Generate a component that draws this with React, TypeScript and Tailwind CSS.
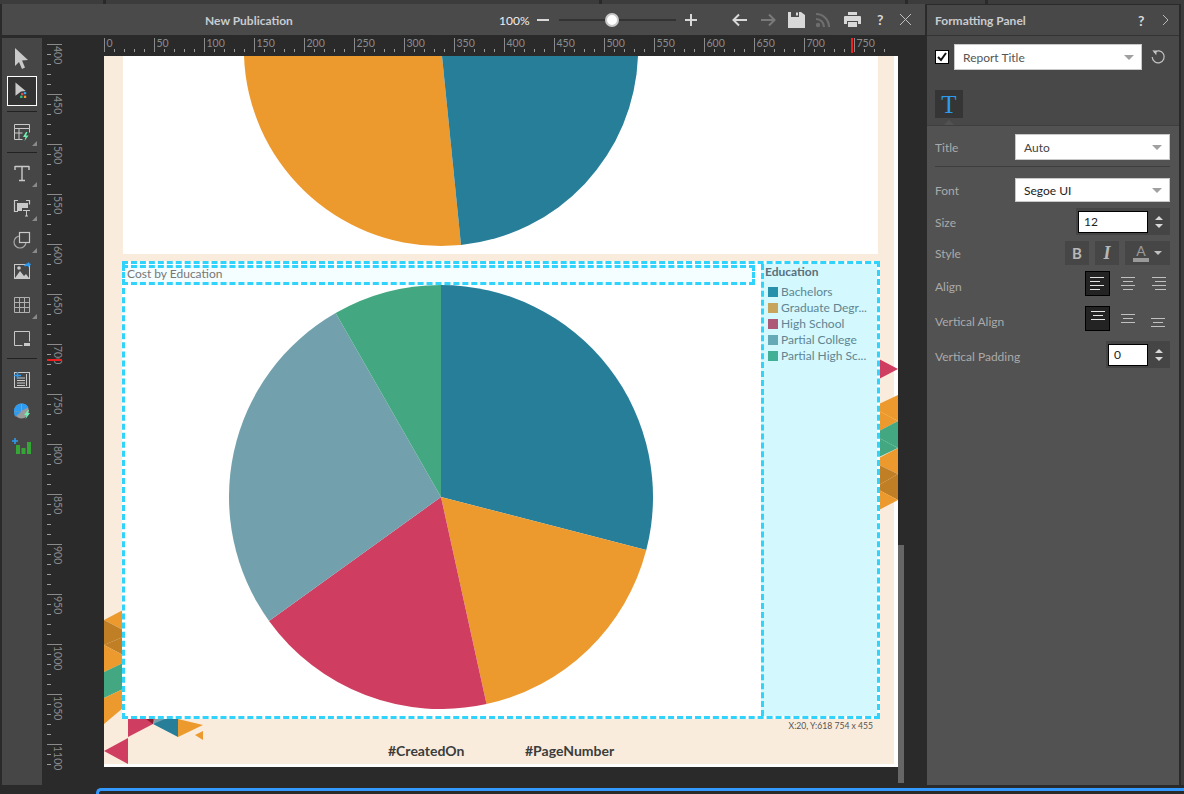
import React from "react";

const ticksH = Array.from({ length: 79 }, (_, i) => i);
const ticksV = Array.from({ length: 73 }, (_, i) => i);

function TopRuler() {
  return (
    <svg width="821" height="21" className="block">
      {ticksH.map((i) => {
        const x = i * 10 + 0.5;
        const major = i % 5 === 0;
        return <line key={i} x1={x} x2={x} y1={major ? 3 : 14} y2={17} stroke={major ? "#8a8a8a" : "#9a9a9a"} />;
      })}
      {ticksH.filter((i) => i % 5 === 0).map((i) => (
        <text key={i} x={i * 10 + 2.5} y={12} fontSize="10.5" fill="#8c8c8c" fontFamily="Lato, sans-serif">{i * 10}</text>
      ))}
      <rect x="747" y="3" width="2" height="15" fill="#ee2020" />
    </svg>
  );
}

function LeftRuler() {
  return (
    <svg width="62" height="750" className="block">
      {ticksV.map((i) => {
        const y = i * 10 + 9.5;
        const major = i % 5 === 0;
        return <line key={i} x1={5} x2={major ? 20 : 9} y1={y} y2={y} stroke={major ? "#8a8a8a" : "#9a9a9a"} />;
      })}
      {ticksV.filter((i) => i % 5 === 0).map((i) => (
        <text key={i} transform={`translate(12 ${i * 10 + 11}) rotate(90)`} fontSize="10.5" fill="#8c8c8c" fontFamily="Lato, sans-serif">{400 + i * 10}</text>
      ))}
      <rect x="5" y="324" width="15" height="2" fill="#ee2020" />
    </svg>
  );
}

function Corner() {
  return <path d="M30 24l-5 5h5z" fill="#8a8a8a" />;
}

function Tool({ children, h = 32, selected = false }: { children: React.ReactNode; h?: number; selected?: boolean }) {
  return (
    <div className="flex items-center justify-center" style={{ height: h }}>
      <div className={selected ? "shrink-0 w-[30px] h-[30px] border border-white bg-[#333333] flex items-center justify-center" : "shrink-0 flex items-center justify-center w-[30px] h-[30px]"}>
        <svg width="30" height="30" viewBox="0 0 30 30">{children}</svg>
      </div>
    </div>
  );
}

function Sep() {
  return <div className="mx-[5px] h-px bg-[#222222] shrink-0" />;
}

function Tools() {
  return (
    <div className="w-[40px] h-[747px] mt-[3px] bg-[#464646] flex flex-col">
      <div className="h-[4px]" />
      <Tool h={32}><path d="M8 5l13 12-6 .5 3 7-3 1.5-3-7-4 4z" fill="#c9c9c9" /></Tool>
      <div className="h-[1px]" />
      <Tool h={32} selected>
        <path d="M8 6l11 9-5 .5L8 20z" fill="#c9c9c9" />
        <rect x="14" y="17" width="2.500" height="2.500" fill="#ea4a4a" />
        <rect x="17" y="16" width="2.500" height="2.500" fill="#35a5ee" />
        <rect x="13" y="20" width="2.500" height="2.500" fill="#35c08a" />
        <rect x="17" y="20" width="2.500" height="2.500" fill="#ee9a2e" />
      </Tool>
      <div className="h-[4px]" />
      <Sep />
      <Tool h={40}>
        <path d="M7.500 7.500h15v4h-15zM7.500 11.500v11h8M22.500 11.500v4M7.500 16h8M12 11.500v11" fill="none" stroke="#c9c9c9" />
        <path d="M19 15l-3 5h2.500l-1 4 4-5.500h-2.500l1.500-3.500z" fill="#6ff0b0" />
        <Corner />
      </Tool>
      <Sep />
      <Tool h={40}>
        <path d="M8 8.500h14M15 8.500V22.500M12 22.500h6M8 8v4M22 8v4" fill="none" stroke="#c9c9c9" strokeWidth="1.400" />
        <Corner />
      </Tool>
      <Tool h={28}>
        <path d="M11 8.500H7.500v11H11M19 8.500h3.500v4" fill="none" stroke="#c9c9c9" strokeWidth="1.200" />
        <rect x="10" y="11" width="11" height="5" fill="#c9c9c9" />
        <rect x="10" y="16" width="5" height="3" fill="#c9c9c9" />
        <path d="M16 18.500h7M19.500 18.500v5.500M18 24h3" stroke="#c9c9c9" fill="none" />
        <Corner />
      </Tool>
      <Tool h={36}>
        <circle cx="13" cy="18" r="6" fill="none" stroke="#a8a8a8" strokeWidth="1.200" />
        <rect x="12.500" y="8.500" width="10" height="10" fill="#464646" stroke="#c9c9c9" strokeWidth="1.200" />
        <Corner />
      </Tool>
      <Tool h={28}>
        <rect x="7.500" y="8.500" width="15" height="14" fill="none" stroke="#c9c9c9" />
        <path d="M8 22l5-7 4 5 2-2 3 4z" fill="#c9c9c9" />
        <circle cx="12" cy="12" r="1.800" fill="#c9c9c9" />
        <path d="M17 10c1-2 3-3 4-2.500v-1.500l3 2.500-3 3V10c-1 0-2 .5-4 0z" fill="#2e9bf0" />
      </Tool>
      <Tool h={40}>
        <path d="M7.500 7.500h15v15h-15zM7.500 12.500h15M7.500 17.500h15M12.500 7.500v15M17.500 7.500v15" fill="none" stroke="#b0b0b0" />
        <Corner />
      </Tool>
      <Tool h={26}>
        <path d="M7.500 22.500v-14h15v10M7.500 22.500h8" fill="none" stroke="#c9c9c9" />
        <rect x="17" y="20" width="6" height="3" fill="#c9c9c9" />
      </Tool>
      <div className="h-[7px]" />
      <Sep />
      <Tool h={40}>
        <rect x="7.500" y="8.500" width="15" height="15" fill="none" stroke="#c9c9c9" />
        <path d="M10 14h8M10 16.500h8M10 19h8M10 21.500h8M19.500 10v12" stroke="#c9c9c9" />
        <path d="M7 11.500h7M10.500 8v7" stroke="#2e9bf0" strokeWidth="1.600" />
      </Tool>
      <Tool h={24}>
        <circle cx="14.500" cy="15" r="7.500" fill="#9a9a9a" />
        <path d="M15 14.500V7.500a7.500 7.500 0 0 1 6.500 3.800zM14 15.500H7a7.500 7.500 0 0 1 7-8zM14 15.800l-5.500 5A7.500 7.500 0 0 1 7 16z" fill="#2e9bf0" />
        <path d="M21 14l-4 5h2.500l-1 4 4.500-6h-2.500l1.500-3z" fill="#6ff0b0" />
      </Tool>
      <Tool h={44}>
        <path d="M5 11h6M8 8v6" stroke="#2e9bf0" strokeWidth="1.600" />
        <rect x="9" y="15" width="4" height="9" fill="#35a535" />
        <rect x="14.500" y="18" width="4" height="6" fill="#35a535" />
        <rect x="20" y="12" width="4" height="12" fill="#35a535" />
      </Tool>
    </div>
  );
}

function pt(cx: number, cy: number, r: number, a: number) {
  const t = (a * Math.PI) / 180;
  return [cx + r * Math.sin(t), cy - r * Math.cos(t)];
}

function Pie() {
  const slices: [number, number, string][] = [
    [0, 104.5, "#267e99"],
    [104.5, 167.6, "#ec9a2e"],
    [167.6, 234.2, "#cf3d60"],
    [234.2, 330.2, "#72a1ad"],
    [330.2, 360, "#43a882"],
  ];
  return (
    <svg width="424" height="424" viewBox="0 0 424 424" className="block">
      {slices.map(([a, b, c]) => {
        const [x1, y1] = pt(212, 212, 212, a);
        const [x2, y2] = pt(212, 212, 212, b);
        return <path key={a} d={`M212 212L${x1} ${y1}A212 212 0 ${b - a > 180 ? 1 : 0} 1 ${x2} ${y2}Z`} fill={c} />;
      })}
    </svg>
  );
}

function TopPie() {
  return (
    <svg width="396" height="190" viewBox="0 0 396 190" className="block">
      <path d="M1 0A197 197 0 0 0 198 190 L218 189 L199 0Z" fill="#ec9a2e" />
      <path d="M199 0L218 189A197 197 0 0 0 395 0Z" fill="#267e99" />
    </svg>
  );
}

function Triangles() {
  const o = "#ec9a2e", d = "#c07f24", g = "#43a882", r = "#cf3d60", t = "#267e99";
  const polys: [string, string][] = [
    ["775,303 794,313 775,323", r],
    ["775,348 794,339 794,365 775,355", o],
    ["775,355 794,365 775,375", o],
    ["775,375 794,365 794,392 775,382", g],
    ["775,382 794,392 775,401", g],
    ["775,402 794,392 794,418 775,409", o],
    ["775,409 794,418 775,429", d],
    ["775,429 794,418 794,444 775,434", d],
    ["775,434 794,444 775,454", o],
    ["0,564 19,554 19,574", o],
    ["0,564 19,574 19,581 0,589", d],
    ["0,589 19,581 19,599", d],
    ["0,589 19,599 19,607 0,616", o],
    ["0,616 19,607 19,633 0,642", g],
    ["0,642 19,633 19,652 0,668", o],
    ["24,663 51,663 49,668 24,681", r],
    ["42,663 49,668 49,663", "#8a1c2c"],
    ["49,668 74,681 74,663 56,663", t],
    ["49,668 61,663 51,663", "#72a1ad"],
    ["74,663 99,669 74,681", o],
    ["91,679 99,675 99,684", o],
    ["0,695 24,682 24,708", r],
  ];
  return (
    <svg width="794" height="711" className="absolute left-0 top-0 pointer-events-none">
      {polys.map(([p, c], i) => <polygon key={i} points={p} fill={c} />)}
    </svg>
  );
}

function Caret({ color = "#a0a0a0" }: { color?: string }) {
  return <span className="w-0 h-0 border-l-[5px] border-r-[5px] border-t-[5px] border-l-transparent border-r-transparent" style={{ borderTopColor: color }} />;
}

function Select({ text, w, h, color = "#444444" }: { text: string; w: string; h: string; color?: string }) {
  return (
    <div className={`${w} ${h} bg-white border border-[#c8c8c8] flex items-center justify-between pl-[8px] pr-[7px] text-[12px]`} style={{ color }}>
      <span className="translate-y-px">{text}</span>
      <Caret />
    </div>
  );
}

function Spin() {
  return (
    <div className="flex-1 flex flex-col items-center gap-[4px]">
      <span className="w-0 h-0 border-l-[4px] border-r-[4px] border-b-[4px] border-l-transparent border-r-transparent border-b-[#d8d8d8]" />
      <span className="w-0 h-0 border-l-[4px] border-r-[4px] border-t-[4px] border-l-transparent border-r-transparent border-t-[#d8d8d8]" />
    </div>
  );
}

function Label({ children, dy = "translate-y-px" }: { children: React.ReactNode; dy?: string }) {
  return <span className={`text-[12px] text-[#aaaaaa] ${dy}`}>{children}</span>;
}

function Lines({ kind, selected = false, dx = 0 }: { kind: "l" | "c" | "r"; selected?: boolean; dx?: number }) {
  const rows: [number, number][] = kind === "l" ? [[4, 18], [4, 14], [4, 18], [4, 14]] : kind === "c" ? [[4, 18], [6, 16], [4, 18], [6, 16]] : [[4, 18], [7, 18], [4, 18], [7, 18]];
  const top = selected ? 5.5 : 6.5;
  return (
    <div className={selected ? "w-[25px] h-[25px] bg-[#232323] border border-black" : "w-[25px] h-[25px]"}>
      <svg width="25" height="25">
        {rows.map(([a, b], i) => <line key={i} x1={a + dx} x2={b + dx} y1={top + i * 4} y2={top + i * 4} stroke={selected ? "#e4e4e4" : "#c0c0c0"} />)}
      </svg>
    </div>
  );
}

function VLines({ pos, selected = false }: { pos: "t" | "m" | "b"; selected?: boolean }) {
  const base = pos === "t" ? 4.5 : pos === "m" ? 8.5 : 12.5;
  const dx = selected ? 0 : 1;
  const rows: [number, number][] = [[5, 19], [7, 17], [5, 19]];
  return (
    <div className={selected ? "w-[25px] h-[25px] bg-[#232323] border border-black" : "w-[25px] h-[25px]"}>
      <svg width="25" height="25">
        {rows.map(([a, b], i) => <line key={i} x1={a + dx} x2={b + dx} y1={base + i * 4} y2={base + i * 4} stroke={selected ? "#e4e4e4" : "#c0c0c0"} />)}
      </svg>
    </div>
  );
}

function Panel() {
  return (
    <div className="w-[252px] ml-[2px] mt-px h-[780px] flex flex-col bg-[#525252]">
      <div className="h-[30px] bg-[#484848] flex items-center pl-[8px] relative">
        <span className="text-[12px] font-bold text-[#c8ccd0] translate-y-px">Formatting Panel</span>
        <span className="absolute left-[211px] top-[5px] text-[14px] font-bold text-[#d8d8d8]">?</span>
        <svg width="10" height="12" className="absolute left-[234px] top-[9px]"><path d="M2 1l5 5-5 5" fill="none" stroke="#b8b8b8" /></svg>
      </div>
      <div className="h-px bg-[#333333]" />
      <div className="h-[89px] bg-[#484848] px-[8px] pt-[8px]">
        <div className="flex items-center h-[26px]">
          <div className="w-[14px] h-[14px] bg-white border border-black flex items-center justify-center">
            <svg width="12" height="12"><path d="M2 6l3 3 5-7" fill="none" stroke="#111111" strokeWidth="2" /></svg>
          </div>
          <div className="ml-[5px]"><Select text="Report Title" w="w-[188px]" h="h-[26px]" color="#555555" /></div>
          <svg width="16" height="16" className="ml-[8px]" viewBox="0 0 16 16">
            <path d="M4 3.500A6 6 0 1 1 2.200 8" fill="none" stroke="#c4c4c4" strokeWidth="1.200" />
            <path d="M2 1.500h4.500V6z" fill="#c4c4c4" transform="rotate(8 4 4)" />
          </svg>
        </div>
        <div className="mt-[20px] w-[28px] h-[28px] bg-[#353535] flex items-center justify-center text-[25px] font-normal leading-none text-[#2e9bf0] font-[family-name:Liberation_Serif,serif]">T</div>
      </div>
      <div className="h-px bg-[#3e3e3e] relative">
        <span className="absolute left-[17px] -top-[5px] w-0 h-0 border-l-[5px] border-r-[5px] border-b-[5px] border-l-transparent border-r-transparent border-b-[#525252]" />
      </div>
      <div className="flex-1 px-[8px] pt-[8px] flex flex-col">
        <div className="flex items-center justify-between h-[26px] pr-[1px]">
          <Label>Title</Label>
          <Select text="Auto" w="w-[155px]" h="h-[26px]" />
        </div>
        <div className="mt-[6px] h-px bg-[#3e3e3e] mr-[1px]" />
        <div className="mt-[11px] flex items-center justify-between h-[24px] pr-[1px]">
          <Label>Font</Label>
          <Select text="Segoe UI" w="w-[155px]" h="h-[24px]" color="#222222" />
        </div>
        <div className="mt-[6px] flex items-center justify-between h-[27px] pr-[1px]">
          <Label>Size</Label>
          <div className="w-[94px] h-[27px] bg-[#454545] flex items-center pl-[2px]">
            <div className="w-[70px] h-[22px] bg-white border border-black text-[12px] text-[#222222] pl-[5px] flex items-center">12</div>
            <Spin />
          </div>
        </div>
        <div className="mt-[6px] flex items-center h-[24px] pr-[1px]">
          <Label>Style</Label>
          <div className="ml-auto flex gap-[6px]">
            <div className="w-[24px] h-[24px] bg-[#464646] flex items-center justify-center text-[15px] font-bold text-[#b8b8b8]">B</div>
            <div className="w-[24px] h-[24px] bg-[#464646] flex items-center justify-center text-[18px] italic font-bold text-[#b8b8b8] font-[family-name:Liberation_Serif,serif]">I</div>
            <div className="w-[45px] h-[24px] bg-[#464646] flex items-center pl-[8px] gap-[5px]">
              <div className="flex flex-col items-center w-[16px]">
                <span className="text-[14px] leading-[14px] text-[#9a9a9a]">A</span>
                <span className="w-[16px] h-[4px] bg-[#9a9a9a]" />
              </div>
              <span className="w-0 h-0 border-l-[4px] border-r-[4px] border-t-[4px] border-l-transparent border-r-transparent border-t-[#c0c0c0]" />
            </div>
          </div>
        </div>
        <div className="mt-[6px] flex items-center h-[25px] pr-[1px]">
          <Label dy="translate-y-[3px]">Align</Label>
          <div className="ml-auto flex gap-[5px]">
            <Lines kind="l" selected />
            <Lines kind="c" dx={2} />
            <Lines kind="r" dx={3} />
          </div>
        </div>
        <div className="mt-[10px] flex items-center h-[25px] pr-[1px]">
          <Label dy="translate-y-[3px]">Vertical Align</Label>
          <div className="ml-auto flex gap-[5px]">
            <VLines pos="t" selected />
            <VLines pos="m" />
            <VLines pos="b" />
          </div>
        </div>
        <div className="mt-[10px] flex items-center h-[27px] pr-[1px]">
          <Label dy="translate-y-[2px]">Vertical Padding</Label>
          <div className="ml-auto w-[64px] h-[27px] bg-[#454545] flex items-center pl-[2px]">
            <div className="w-[40px] h-[22px] bg-white border border-black text-[12px] text-[#222222] pl-[5px] flex items-center">0</div>
            <Spin />
          </div>
        </div>
      </div>
    </div>
  );
}

function Toolbar() {
  return (
    <div className="h-[31px] bg-[#4a4a4a] flex items-center relative">
      <span className="ml-[203px] w-[294px] text-[12px] font-bold text-[#c8ccd0] translate-y-px">New Publication</span>
      <span className="text-[12px] text-[#eeeeee] w-[38px] translate-y-px">100%</span>
      <svg width="12" height="12" className="mr-[10px]"><rect y="5" width="12" height="2" fill="#d8d8d8" /></svg>
      <div className="w-[117px] h-[2px] bg-[#333333] relative">
        <span className="absolute left-[46px] -top-[6px] w-[14px] h-[14px] rounded-full bg-white border-2 border-[#c8c8c8]" />
      </div>
      <svg width="12" height="12" className="ml-[9px]"><path d="M0 6h12M6 0v12" stroke="#d8d8d8" strokeWidth="2" /></svg>
      <svg width="16" height="14" className="ml-[35px]"><path d="M15 7H2M7 1.500L1.500 7 7 12.500" fill="none" stroke="#d8d8d8" strokeWidth="2" /></svg>
      <svg width="16" height="14" className="ml-[12px]"><path d="M1 7h13M9 1.500L14.500 7 9 12.500" fill="none" stroke="#7a7a7a" strokeWidth="2" /></svg>
      <svg width="17" height="16" className="ml-[12px]"><path d="M0 0h3v5h8V0h2l4 3v13H0z" fill="#d8d8d8" /><rect x="8" y="0.500" width="2" height="3" fill="#d8d8d8" /></svg>
      <svg width="17" height="16" className="ml-[10px]" viewBox="0 0 17 16"><circle cx="3" cy="13" r="2.200" fill="#6e6e6e" /><path d="M1 7a8 8 0 0 1 8 8M1 2a13 13 0 0 1 13 13" fill="none" stroke="#6e6e6e" strokeWidth="2.200" /></svg>
      <svg width="17" height="15" className="ml-[12px]"><path d="M4 0h9v3H4zM1 4h15a1 1 0 0 1 1 1v7h-3V9H3v3H0V5a1 1 0 0 1 1-1zM4 10h9v5H4z" fill="#d8d8d8" /></svg>
      <span className="ml-[16px] text-[14px] font-bold text-[#d8d8d8] w-[10px]">?</span>
      <svg width="13" height="13" className="ml-[12px]"><path d="M1 1l11 11M12 1L1 12" stroke="#c0c0c0" /></svg>
    </div>
  );
}

function Page() {
  const legend: [string, string][] = [
    ["#2790aa", "Bachelors"],
    ["#c8a55c", "Graduate Degr..."],
    ["#ae5878", "High School"],
    ["#66aab8", "Partial College"],
    ["#42b096", "Partial High Sc..."],
  ];
  return (
    <div className="w-[794px] h-[711px] bg-white relative overflow-hidden">
      <div className="w-[790px] h-[708px] bg-[#f9ecdc] flex flex-col pl-[19px]">
        <div className="w-[755px] h-[198px] bg-white pl-[120px] shrink-0">
          <TopPie />
        </div>
        <div className="relative z-10 mt-[7px] -ml-px w-[758px] h-[458px] border-[3px] border-dashed border-[#2fd3fb] flex shrink-0 bg-white">
          <div className="w-[636px] flex flex-col">
            <div className="mt-px h-[20px] w-[633px] -ml-[3px] border-[3px] border-dashed border-[#2fd3fb] bg-[#f4fdff] text-[12px] leading-[12px] text-[#777777] pl-[2px]">Cost by Education</div>
            <div className="pl-[104px]">
              <Pie />
            </div>
          </div>
          <div className="flex-1 border-l-[3px] border-dashed border-[#2fd3fb] bg-[#d3f8fe] pl-[1px]">
            <div className="text-[12px] font-bold text-[#58707c] leading-[16px]">Education</div>
            <div className="mt-[4px] pl-[3px] flex flex-col">
              {legend.map(([c, t]) => (
                <div key={t} className="flex items-center h-[16px] gap-[3px]">
                  <span className="w-[10px] h-[10px] shrink-0" style={{ background: c }} />
                  <span className="text-[12px] whitespace-nowrap text-[#5f8592]">{t}</span>
                </div>
              ))}
            </div>
          </div>
        </div>
        <div className="relative z-10 h-[15px] text-right text-[8.6px] leading-[15px] text-[#555555] pr-[21px] w-[771px]">X:20, Y:618 754 x 455</div>
        <div className="relative z-10 mt-[7px] flex text-[14px] font-bold text-[#3c3c3c] leading-[20px]">
          <span className="ml-[265px] w-[137px]">#CreatedOn</span>
          <span>#PageNumber</span>
        </div>
      </div>
      <Triangles />
    </div>
  );
}

export default function App() {
  return (
    <div className="relative w-[1184px] h-[794px] overflow-hidden bg-[#2a2a2a] font-[family-name:Lato,sans-serif] flex flex-col">
      <div className="h-[4px] bg-[#3c3c3c] flex">
        <div className="ml-[103px] w-[3px] bg-[#2a2a2a]" />
        <div className="ml-[493px] w-[3px] bg-[#2a2a2a]" />
        <div className="ml-[303px] w-[3px] bg-[#2a2a2a]" />
        <div className="ml-[77px] w-[3px] bg-[#2a2a2a]" />
      </div>
      <div className="flex h-[781px] pl-[2px]">
        <div className="w-[923px] flex flex-col">
          <Toolbar />
          <div className="flex flex-1">
            <Tools />
            <LeftRuler />
            <div className="flex-1 flex flex-col">
              <TopRuler />
              <div className="flex">
                <Page />
                <div className="ml-0 mt-[489px] w-[6px] h-[238px] bg-[#666666]" />
              </div>
            </div>
          </div>
        </div>
        <Panel />
        <div className="ml-[2px] w-[3px] bg-[#3c3c3c]" />
      </div>
      <div className="mt-[3px] ml-[96px] flex-1 border-t-[3px] border-l-[3px] border-[#3399ff] rounded-tl-[5px] bg-[#2a2a2a]" />
    </div>
  );
}
